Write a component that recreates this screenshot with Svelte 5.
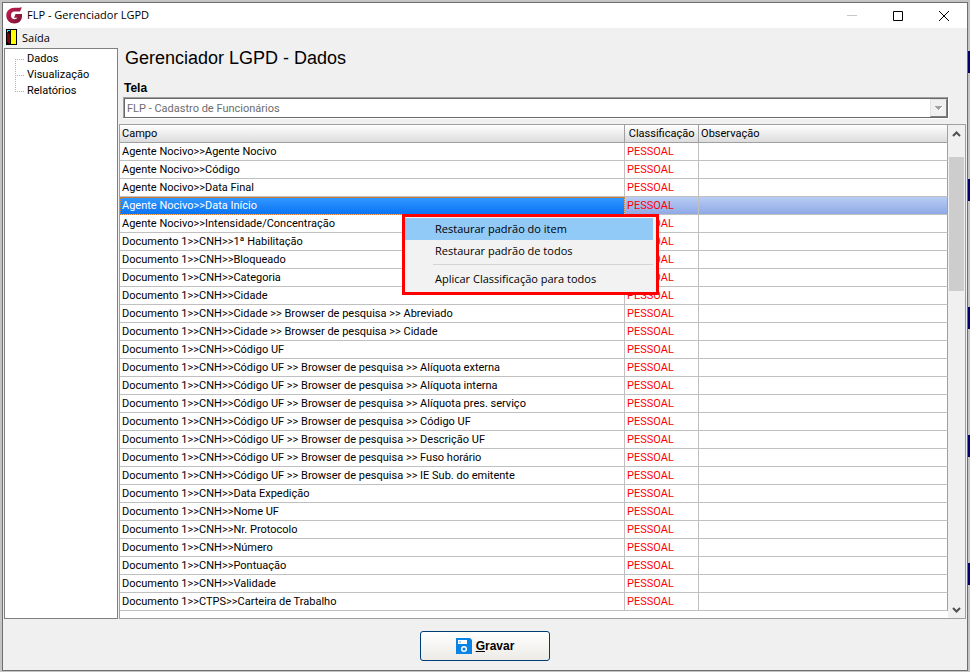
<script>
	const telas = ['Dados', 'Visualização', 'Relatórios'];

	const campos = [
		'Agente Nocivo>>Agente Nocivo',
		'Agente Nocivo>>Código',
		'Agente Nocivo>>Data Final',
		'Agente Nocivo>>Data Início',
		'Agente Nocivo>>Intensidade/Concentração',
		'Documento 1>>CNH>>1ª Habilitação',
		'Documento 1>>CNH>>Bloqueado',
		'Documento 1>>CNH>>Categoria',
		'Documento 1>>CNH>>Cidade',
		'Documento 1>>CNH>>Cidade >> Browser de pesquisa >> Abreviado',
		'Documento 1>>CNH>>Cidade >> Browser de pesquisa >> Cidade',
		'Documento 1>>CNH>>Código UF',
		'Documento 1>>CNH>>Código UF >> Browser de pesquisa >> Alíquota externa',
		'Documento 1>>CNH>>Código UF >> Browser de pesquisa >> Alíquota interna',
		'Documento 1>>CNH>>Código UF >> Browser de pesquisa >> Alíquota pres. serviço',
		'Documento 1>>CNH>>Código UF >> Browser de pesquisa >> Código UF',
		'Documento 1>>CNH>>Código UF >> Browser de pesquisa >> Descrição UF',
		'Documento 1>>CNH>>Código UF >> Browser de pesquisa >> Fuso horário',
		'Documento 1>>CNH>>Código UF >> Browser de pesquisa >> IE Sub. do emitente',
		'Documento 1>>CNH>>Data Expedição',
		'Documento 1>>CNH>>Nome UF',
		'Documento 1>>CNH>>Nr. Protocolo',
		'Documento 1>>CNH>>Número',
		'Documento 1>>CNH>>Pontuação',
		'Documento 1>>CNH>>Validade',
		'Documento 1>>CTPS>>Carteira de Trabalho'
	];

	let selected = $state(3);
	let menuOpen = $state(true);

	const closeMenu = () => (menuOpen = false);

	const openMenu = (e, i) => {
		e.preventDefault();
		selected = i;
		menuOpen = true;
	};
</script>

<svelte:window onkeydown={e => e.key === 'Escape' && closeMenu()} />

<div class="desktop">
	<div class="window">
		<header class="titlebar">
			<svg class="logo" width="17" height="17" viewBox="0 0 17 17">
				<defs>
					<linearGradient id="brand" x1="0" y1="0" x2="1" y2="1">
						<stop offset="0" stop-color="#c4204e" />
						<stop offset="1" stop-color="#7c1236" />
					</linearGradient>
				</defs>
				<path fill="url(#brand)" d="M16 0 L14 4.500 H8.500 C6.300 4.500 5 6 5 8.300 C5 10.800 6.500 12.200 8.500 12.200 C10 12.200 11 11.600 11.400 10.800 H8 L9.500 7 H16 V9 C16 13.500 13 16.500 8.500 16.500 C3.800 16.500 0.300 13.200 0.300 8.500 C0.300 4 3.800 0.800 8.500 0.800 H12 C14 0.800 15.200 0.600 16 0 Z" />
			</svg>
			<span class="title">FLP - Gerenciador LGPD</span>
			<div class="controls">
				<button aria-label="Minimizar" disabled>
					<svg width="10" height="10" viewBox="0 0 10 10"><path d="M0 4.500H10" stroke="#c8c8c8" /></svg>
				</button>
				<button aria-label="Maximizar">
					<svg width="10" height="10" viewBox="0 0 10 10"><path d="M.5 .5H9.500V9.500H.5Z" fill="none" stroke="#000" /></svg>
				</button>
				<button aria-label="Fechar">
					<svg width="10" height="10" viewBox="0 0 10 10"><path d="M0 0L10 10M10 0L0 10" stroke="#000" /></svg>
				</button>
			</div>
		</header>

		<nav class="menubar">
			<button>
				<svg width="11" height="16" viewBox="0 0 11 16" shape-rendering="crispEdges">
					<path d="M0 0H11V16H0Z" fill="#000" />
					<path d="M5 1H10V15H5Z" fill="#ff0" />
					<path d="M1 3H2V4H3V5H4V15H3V14H2V13H1Z" fill="#800000" />
					<path d="M1 1H4V2H2V3H1Z" fill="#0ff" />
				</svg>
				<span>Saída</span>
			</button>
		</nav>

		<div class="body">
			<ul class="tree">
				{#each telas as tela}
					<li><button>{tela}</button></li>
				{/each}
			</ul>

			<main>
				<h1>Gerenciador LGPD - Dados</h1>
				<label for="tela">Tela</label>
				<div class="combo">
					<select id="tela" disabled>
						<option>FLP - Cadastro de Funcionários</option>
					</select>
					<span class="drop">
						<svg width="8" height="5" viewBox="0 0 8 5" shape-rendering="crispEdges">
							<path d="M1 1H8L4.500 5Z" fill="#fff" />
							<path d="M0 0H7V1H6V2H5V3H4V4H3V3H2V2H1V1H0Z" fill="#a0a0a0" />
						</svg>
					</span>
				</div>

				<div class="grid">
					<div class="rows">
						<table>
							<colgroup>
								<col class="col-campo" />
								<col class="col-class" />
								<col />
							</colgroup>
							<thead>
								<tr>
									<th>Campo</th>
									<th class="center">Classificação</th>
									<th>Observação</th>
								</tr>
							</thead>
							<tbody>
								{#each campos as campo, i}
									<tr
										class:selected={i === selected}
										onclick={() => (selected = i)}
										oncontextmenu={e => openMenu(e, i)}
									>
										<td>{campo}</td>
										<td class="pessoal">PESSOAL</td>
										<td></td>
									</tr>
								{/each}
							</tbody>
						</table>

						{#if menuOpen}
							<div class="popup" role="menu">
								<button role="menuitem" class="active" onclick={closeMenu}>Restaurar padrão do item</button>
								<button role="menuitem" onclick={closeMenu}>Restaurar padrão de todos</button>
								<hr />
								<button role="menuitem" onclick={closeMenu}>Aplicar Classificação para todos</button>
							</div>
						{/if}
					</div>

					<div class="scrollbar">
						<button aria-label="Rolar para cima">
							<svg width="9" height="6" viewBox="0 0 9 6"><path d="M1 5L4.500 1.500L8 5" fill="none" stroke="#505050" stroke-width="2" /></svg>
						</button>
						<div class="track"><div class="thumb"></div></div>
						<button aria-label="Rolar para baixo">
							<svg width="9" height="6" viewBox="0 0 9 6"><path d="M1 1L4.500 4.500L8 1" fill="none" stroke="#505050" stroke-width="2" /></svg>
						</button>
					</div>
				</div>
			</main>
		</div>

		<footer>
			<button class="save">
				<svg width="16" height="16" viewBox="0 0 16 16">
					<path d="M0 0H14L16 2V16H0Z" fill="#0a84e4" />
					<path d="M2 2H11V6H2Z" fill="#fff" />
					<path d="M3 3H5V5H3Z" fill="#9fd0f8" />
					<circle cx="8" cy="11" r="2.300" fill="none" stroke="#fff" stroke-width="1.500" />
				</svg>
				<span><u>G</u>ravar</span>
			</button>
		</footer>
	</div>
</div>

<style>
	:global(body) {
		margin: 0;
	}
	.desktop {
		box-sizing: border-box;
		min-height: 100vh;
		padding: 2px 2px 1px;
		display: flex;
		font-family: Roboto, "Liberation Sans", sans-serif;
		font-size: 11px;
		color: #000;
		background:
			repeating-linear-gradient(#c4c4c4 0 51px, #000070 51px 73px, #c4c4c4 73px 128px) right / 2px 100% no-repeat,
			#c4c4c4;
	}
	.window {
		flex: 1;
		display: flex;
		flex-direction: column;
		border: 1px solid #6e6e6e;
		background: #f0f0f0;
	}
	button {
		margin: 0;
		padding: 0;
		border: 0;
		background: none;
		font: inherit;
		color: inherit;
	}
	svg {
		display: block;
		flex: none;
	}

	.titlebar {
		display: flex;
		align-items: center;
		height: 25px;
		padding-left: 3px;
		background: #fff;
	}
	.title {
		flex: 1;
		margin-left: 4px;
		padding-bottom: 2px;
		font-family: "Open Sans", sans-serif;
		font-size: 11px;
	}
	.controls {
		display: flex;
	}
	.controls button {
		width: 46px;
		height: 25px;
		display: grid;
		place-items: center;
	}

	.menubar {
		display: flex;
		height: 20px;
		padding-left: 3px;
		font-family: "Open Sans", sans-serif;
		font-size: 11px;
	}
	.menubar button {
		display: flex;
		align-items: center;
		gap: 5px;
	}
	.menubar svg {
		margin-bottom: 2px;
	}
	.menubar span {
		padding-bottom: 2px;
	}

	.body {
		flex: 1;
		display: flex;
		padding: 0 1px;
	}
	.tree {
		box-sizing: border-box;
		width: 114px;
		margin: 0;
		padding: 2px 0 0 10px;
		list-style: none;
		border: 1px solid #808080;
		background: #fff;
	}
	.tree li {
		display: flex;
		height: 16px;
		line-height: 16px;
		background:
			linear-gradient(90deg, #b0b0b0 50%, transparent 50%) 0 8px / 2px 1px repeat-x,
			linear-gradient(#b0b0b0 50%, transparent 50%) 0 0 / 1px 2px repeat-y;
	}
	.tree li:first-child {
		background:
			linear-gradient(90deg, #b0b0b0 50%, transparent 50%) 0 8px / 2px 1px repeat-x,
			linear-gradient(#fff, #fff) 0 0 / 1px 8px no-repeat,
			linear-gradient(#b0b0b0 50%, transparent 50%) 0 0 / 1px 2px repeat-y;
	}
	.tree li:last-child {
		background:
			linear-gradient(90deg, #b0b0b0 50%, transparent 50%) 0 8px / 2px 1px repeat-x,
			linear-gradient(#fff, #fff) 0 9px / 1px 7px no-repeat,
			linear-gradient(#b0b0b0 50%, transparent 50%) 0 0 / 1px 2px repeat-y;
	}
	.tree button {
		flex: 1;
		margin-left: 9px;
		padding-left: 3px;
		text-align: left;
		background: #fff;
	}

	main {
		flex: 1;
		display: flex;
		flex-direction: column;
		min-width: 0;
		margin-left: 1px;
	}
	h1 {
		margin: 0 6px;
		line-height: 20px;
		font-family: "Liberation Sans", Arial, sans-serif;
		font-size: 18px;
		font-weight: 400;
	}
	label {
		margin: 12px 5px 0;
		font-family: "Liberation Sans", Arial, sans-serif;
		font-size: 12px;
		font-weight: 700;
		line-height: 16px;
	}
	.combo {
		box-sizing: border-box;
		height: 21px;
		margin: 1px 18px 6px 4px;
		display: flex;
		border: 1px solid;
		border-color: #a0a0a0 #696969 #696969 #a0a0a0;
		box-shadow: inset 1px 1px #696969, 1px 1px #fff;
		padding: 1px 0 0 1px;
		background: #fff;
	}
	select {
		flex: 1;
		appearance: none;
		margin: 0;
		padding: 0 2px;
		border: 0;
		background: none;
		font: inherit;
		color: #6d6d6d;
		opacity: 1;
	}
	.drop {
		box-sizing: border-box;
		width: 17px;
		display: grid;
		place-items: center;
		border: 1px solid;
		border-color: #e3e3e3 #808080 #808080 #e3e3e3;
		background: #f0f0f0;
	}

	.grid {
		flex: 1;
		display: flex;
		border: 1px solid #a0a0a0;
		background: #fff;
	}
	.rows {
		position: relative;
		flex: 1;
		padding-bottom: 7px;
	}
	table {
		width: 100%;
		table-layout: fixed;
		border-collapse: separate;
		border-spacing: 0;
		line-height: 16px;
	}
	.col-campo {
		width: 61%;
	}
	.col-class {
		width: 74px;
	}
	th,
	td {
		height: 16px;
		padding: 1px 2px 0;
		border: 0 solid #c0c0c0;
		border-width: 0 1px 1px 0;
		text-align: left;
		font-weight: 400;
		white-space: nowrap;
	}
	th {
		border-color: #a0a0a0;
		background: linear-gradient(#fff, #dcdcdc);
	}
	td:last-child {
		border-right-color: #a0a0a0;
	}
	.center {
		text-align: center;
	}
	.pessoal {
		color: #f00;
	}
	.selected td {
		background: linear-gradient(#b8ccf4, #8fa9e6);
	}
	.selected td:first-child {
		color: #fff;
		background: linear-gradient(#3399ff, #0a74f4);
		outline: 1px dotted #d08030;
		outline-offset: -1px;
	}

	.popup {
		position: absolute;
		top: 89px;
		left: 282px;
		box-sizing: border-box;
		width: 257px;
		display: flex;
		flex-direction: column;
		padding: 1px 3px 2px 0;
		border: 3px solid #f00;
		background: #f2f2f2;
		font-family: "Open Sans", sans-serif;
		font-size: 11px;
	}
	.popup button {
		height: 22px;
		padding: 0 0 2px 30px;
		text-align: left;
	}
	.popup .active {
		background: #91c9f7;
	}
	.popup hr {
		margin: 2px 0 3px 28px;
		border: 0;
		border-top: 1px solid #d4d4d4;
	}

	.scrollbar {
		width: 15px;
		display: flex;
		flex-direction: column;
		padding: 0 1px;
		background: #f0f0f0;
	}
	.scrollbar button {
		height: 17px;
		display: grid;
		place-items: center;
	}
	.track {
		flex: 1;
		padding-top: 15px;
	}
	.thumb {
		height: 134px;
		background: #cdcdcd;
	}

	footer {
		display: flex;
		justify-content: center;
		padding: 12px 0 9px;
	}
	.save {
		box-sizing: border-box;
		width: 130px;
		height: 30px;
		display: flex;
		align-items: center;
		justify-content: center;
		gap: 4px;
		border: 1px solid #003c74;
		border-radius: 3px;
		background: linear-gradient(#fff, #ecebe6);
		font-family: "Liberation Sans", Arial, sans-serif;
		font-size: 12px;
		font-weight: 700;
	}
</style>
